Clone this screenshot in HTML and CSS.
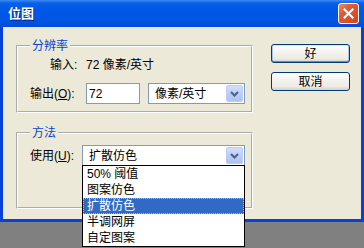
FILE: index.html
```html
<!DOCTYPE html>
<html lang="zh-CN">
  <head>
    <meta charset="UTF-8" />
    <title>位图</title>
    <link rel="stylesheet" href="styles.css">
  </head>
  <body>
    <div class="desktop">
      <div class="xp-window">
        <div class="xp-titlebar">
          <span class="xp-title">位图</span>
          <button class="xp-close" type="button" aria-label="关闭">
            <svg width="11" height="11" viewBox="0 0 11 11">
              <path d="M1.5 1.5 L9.5 9.5 M9.5 1.5 L1.5 9.5" stroke="#fff" stroke-width="2.2" stroke-linecap="square" />
            </svg>
          </button>
        </div>

        <div class="xp-client">
          <div class="bm-groups">
            <!-- 分辨率 -->
            <section class="bm-group bm-group-res">
              <h2 class="bm-legend">分辨率</h2>
              <div class="bm-row bm-row-text">
                <span class="bm-label bm-label-in">输入:</span>
                <span>72 像素/英寸</span>
              </div>
              <div class="bm-row">
                <label class="bm-label bm-label-out" for="bmOut">输出(<u>O</u>):</label>
                <input id="bmOut" class="xp-input" type="text" value="72" />
                <div class="xp-combo bm-combo-unit">
                  <span class="xp-combo-text">像素/英寸</span>
                  <span class="xp-combo-btn">
                    <svg width="9" height="6" viewBox="0 0 9 6"><path d="M1 1 L4.5 4.5 L8 1" fill="none" stroke="#4d6185" stroke-width="2" /></svg>
                  </span>
                </div>
              </div>
            </section>

            <!-- 方法 -->
            <section class="bm-group bm-group-method">
              <h2 class="bm-legend">方法</h2>
              <div class="bm-row">
                <span class="bm-label bm-label-use">使用(<u>U</u>):</span>
                <div class="xp-combo bm-combo-method">
                  <span class="xp-combo-text">扩散仿色</span>
                  <span class="xp-combo-btn">
                    <svg width="9" height="6" viewBox="0 0 9 6"><path d="M1 1 L4.5 4.5 L8 1" fill="none" stroke="#4d6185" stroke-width="2" /></svg>
                  </span>
                  <ul class="xp-list">
                    <li>50% 阈值</li>
                    <li>图案仿色</li>
                    <li class="is-selected">扩散仿色</li>
                    <li>半调网屏</li>
                    <li>自定图案</li>
                  </ul>
                </div>
              </div>
            </section>
          </div>

          <div class="bm-actions">
            <button class="xp-btn xp-btn-default" type="button">好</button>
            <button class="xp-btn" type="button">取消</button>
          </div>
        </div>
      </div>
    </div>
  </body>
</html>
```

FILE: styles.css
```css
body {
  margin: 0;
  background: #808080;
  font: 12px/16px "Liberation Sans", "Noto Sans CJK SC", sans-serif;
  color: #000;
}

.desktop {
  height: 248px;
  background: #808080;
}

.xp-window {
  width: 364px;
  height: 222px;
  display: flex;
  flex-direction: column;
  background: #0841d6;
}

.xp-titlebar {
  height: 27px;
  flex: none;
  display: flex;
  align-items: center;
  justify-content: space-between;
  padding: 0 5px 0 8px;
  box-sizing: border-box;
  background: linear-gradient(
    to bottom,
    #3b8cf5 0,
    #0a5fe8 3px,
    #0058e6 9px,
    #0056e4 20px,
    #004bd6 27px
  );
}

.xp-title {
  color: #fff;
  font-weight: bold;
  font-size: 13px;
  line-height: 16px;
  text-shadow: 1px 1px 0 #0a1e7a;
}

.xp-close {
  width: 21px;
  height: 21px;
  padding: 0;
  display: flex;
  align-items: center;
  justify-content: center;
  border: 1px solid #fff;
  border-radius: 3px;
  background: linear-gradient(135deg, #ee8a6a 0, #e25a33 35%, #cf4520 100%);
}

.xp-client {
  flex: 1;
  margin: 0 3px 3px;
  padding: 18px 0 0 13px;
  display: flex;
  gap: 18px;
  background: #ece9d8;
}

.bm-groups {
  width: 237px;
  display: flex;
  flex-direction: column;
}

/* 分组框：灰线 + 白线的蚀刻边 */
.bm-group {
  position: relative;
  border: 2px groove #fff;
  padding: 10px 0 7px 12px;
}

.bm-legend {
  position: absolute;
  top: -8px;
  left: 12px;
  margin: 0;
  padding: 0 2px;
  font-size: 12px;
  font-weight: normal;
  line-height: 14px;
  color: #0046d5;
  background: #ece9d8;
}

.bm-group-method {
  margin-top: 19px;
  padding: 11px 0 41px 12px;
}

.bm-row {
  display: flex;
  align-items: center;
  height: 21px;
}

.bm-row-text {
  height: 16px;
  margin-bottom: 10px;
}

.bm-label {
  flex: none;
  white-space: nowrap;
}

.bm-label-in {
  margin-left: 20px;
  width: 36px;
}

.bm-label-out {
  width: 56px;
}

.bm-label-use {
  width: 52px;
}

.xp-input {
  width: 54px;
  height: 21px;
  box-sizing: border-box;
  margin: 0 8px 0 0;
  padding: 0 2px;
  border: 1px solid #7f9db9;
  font: inherit;
  outline: none;
}

.xp-combo {
  position: relative;
  height: 21px;
  box-sizing: border-box;
  display: flex;
  align-items: center;
  padding: 1px;
  border: 1px solid #7f9db9;
  background: #fff;
}

.bm-combo-unit {
  width: 97px;
}

.bm-combo-method {
  width: 163px;
}

.xp-combo-text {
  flex: 1;
  padding-left: 5px;
  white-space: nowrap;
}

.xp-combo-btn {
  width: 17px;
  height: 17px;
  box-sizing: border-box;
  display: flex;
  align-items: center;
  justify-content: center;
  border: 1px solid #bccdf6;
  border-radius: 2px;
  background: linear-gradient(to bottom, #d2defc 0, #bccdf8 50%, #aec2f4 100%);
}

/* 下拉列表 */
.xp-list {
  position: absolute;
  top: 100%;
  left: -1px;
  right: -1px;
  margin: 0;
  padding: 0;
  list-style: none;
  border: 1px solid #000;
  background: #fff;
  z-index: 2;
}

.xp-list li {
  height: 16px;
  line-height: 16px;
  padding-left: 4px;
  white-space: nowrap;
}

.xp-list li.is-selected {
  background: #316ac5;
  color: #fff;
  outline: 1px dotted #d9b96a;
  outline-offset: -1px;
}

/* 按钮 */
.bm-actions {
  width: 79px;
  margin-top: -1px;
  display: flex;
  flex-direction: column;
  gap: 9px;
}

.xp-btn {
  height: 19px;
  padding: 0;
  border: 1px solid #003c74;
  border-radius: 3px;
  font: inherit;
  color: #000;
  background: linear-gradient(to bottom, #fff 0, #f4f3ee 40%, #ecebe6 80%, #d6d0c5 100%);
}

.xp-btn-default {
  box-shadow:
    inset 0 1px 0 #cee7ff,
    inset 0 -1px 0 #6982ee,
    inset 1px 0 0 #a8c4f2,
    inset -1px 0 0 #a8c4f2;
}
```
